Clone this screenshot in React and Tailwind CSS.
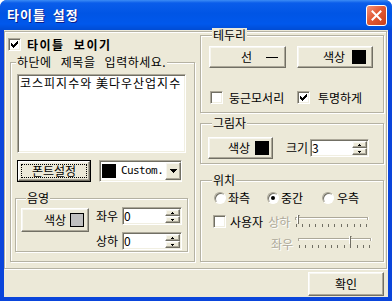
import React from "react";

const sunken =
  "border border-t-[#ACA899] border-l-[#ACA899] border-r-white border-b-white shadow-[inset_1px_1px_0_#716F64,inset_-1px_-1px_0_#F1EFE2]";
const raised =
  "border border-t-white border-l-white border-r-[#716F64] border-b-[#716F64] shadow-[inset_-1px_-1px_0_#ACA899,inset_1px_1px_0_#F7F6F0] bg-[#ECE9D8]";
const etched = "border border-[#B5B2A3] shadow-[inset_1px_1px_0_#fff,1px_1px_0_#fff]";

function Group({ label, labelPos, className, children }) {
  return (
    <div className={`relative ${etched} ${className}`}>
      <span className={`absolute ${labelPos} px-[1px] bg-[#ECE9D8] leading-[14px] whitespace-nowrap`}>
        {label}
      </span>
      {children}
    </div>
  );
}

function Check({ checked }) {
  return (
    <span className={`w-[13px] h-[13px] bg-white ${sunken} flex items-center justify-center shrink-0`}>
      {checked && (
        <svg width="7" height="7" viewBox="0 0 7 7" shapeRendering="crispEdges">
          <path d="M6 0h1v3h-1v1h-1v1h-1v1h-1v1h-1v-1h-1v-1h-1v-3h1v1h1v1h1v-1h1v-1h1z" fill="#000" />
        </svg>
      )}
    </span>
  );
}

function Radio({ checked }) {
  return (
    <span className="w-[12px] h-[12px] rounded-full bg-white border border-t-[#ACA899] border-l-[#ACA899] border-r-white border-b-white shadow-[inset_1px_1px_0_#716F64] flex items-center justify-center shrink-0">
      {checked && <span className="w-[4px] h-[4px] rounded-full bg-black" />}
    </span>
  );
}

function Spin({ value, className }) {
  return (
    <div className={`h-[18px] bg-white ${sunken} flex ${className}`}>
      <span className="flex-1 pl-[1px] leading-[15px] text-[12px]">{value}</span>
      <div className="w-[15px] flex flex-col my-[1px] mr-[1px]">
        <span className={`flex-1 ${raised} flex items-center justify-center`}>
          <svg width="3" height="2" viewBox="0 0 3 2" shapeRendering="crispEdges">
            <path d="M1 0h1v1h1v1h-3v-1h1z" fill="#000" />
          </svg>
        </span>
        <span className={`flex-1 ${raised} flex items-center justify-center`}>
          <svg width="3" height="2" viewBox="0 0 3 2" shapeRendering="crispEdges">
            <path d="M0 0h3v1h-1v1h-1v-1h-1z" fill="#000" />
          </svg>
        </span>
      </div>
    </div>
  );
}

function Slider({ pos }) {
  const ticks = Array.from({ length: 12 }, (_, i) => Math.round(1 + i * 6.4));
  return (
    <svg width="76" height="14" viewBox="0 0 76 14" shapeRendering="crispEdges">
      <rect x="0" y="2" width="73" height="1" fill="#ACA899" />
      <rect x="0" y="2" width="1" height="3" fill="#ACA899" />
      <rect x="1" y="3" width="71" height="1" fill="#fff" />
      <rect x="72" y="2" width="1" height="3" fill="#ACA899" />
      <rect x="73" y="2" width="1" height="3" fill="#fff" />
      <rect x={pos - 1} y="0" width="1" height="8" fill="#fff" />
      <rect x={pos} y="0" width="1" height="9" fill="#716F64" />
      <rect x={pos + 1} y="0" width="1" height="1" fill="#ACA899" />
      {ticks.map((t) => (
        <rect key={t} x={t} y="9" width="1" height="3" fill="#716F64" />
      ))}
    </svg>
  );
}

export default function App() {
  return (
    <div className="w-[392px] h-[301px] flex flex-col bg-[#0A45DB] rounded-t-[7px] overflow-hidden font-['Noto_Sans_CJK_KR',sans-serif] text-[12px] text-black">
      {/* Title bar */}
      <div className="h-[30px] shrink-0 flex items-center pl-[7px] pr-[5px] bg-[linear-gradient(180deg,#3C8CF5_0%,#0A5DEA_10%,#0055E5_45%,#0058EC_80%,#004CD4_100%)]">
        <span className="text-white font-bold text-[13px] tracking-[1px] [word-spacing:3px] leading-[16px] [text-shadow:1px_1px_0_#0A1F8E]">
          타이틀 설정
        </span>
        <div className="ml-auto w-[21px] h-[21px] rounded-[3px] border border-white bg-[linear-gradient(135deg,#F2927A_0%,#E25A35_45%,#C8401C_100%)] flex items-center justify-center">
          <svg width="11" height="11" viewBox="0 0 11 11">
            <path d="M1.5 1.5L9.5 9.5M9.5 1.5L1.5 9.5" stroke="#fff" strokeWidth="2" strokeLinecap="square" />
          </svg>
        </div>
      </div>

      {/* Client */}
      <div className="mx-[4px] mb-[4px] flex-1 bg-[#ECE9D8] flex flex-col">
        <div className={`mt-[1px] w-[383px] h-[238px] ${etched} flex`}>
          {/* Left column */}
          <div className="ml-[3px] w-[187px] flex flex-col">
            <div className="mt-[6px] h-[13px] flex items-center">
              <Check checked />
              <span className="ml-[6px] font-bold leading-[13px] tracking-[1.5px] [word-spacing:5px] whitespace-nowrap">
                타이틀 보이기
              </span>
            </div>
            <Group
              label={<span className="tracking-[0.5px] [word-spacing:6px]">하단에 제목을 입력하세요.</span>}
              labelPos="left-[5px] top-[-8px]"
              className="ml-[2px] mt-[11px] w-[185px] h-[200px] flex flex-col"
            >
              <div className={`ml-[6px] mt-[11px] w-[169px] h-[79px] bg-white ${sunken} pl-[2px] pt-[1px] leading-[14px] tracking-[1px] whitespace-nowrap overflow-hidden`}>
                코스피지수와 美다우산업지수
              </div>
              <div className="ml-[6px] mt-[7px] flex">
                <div className="w-[74px] h-[22px] border border-black flex">
                  <div className={`flex-1 ${raised} p-[2px] flex`}>
                    <div className="flex-1 border border-dotted border-black flex items-center justify-center leading-[14px]">
                      폰트설정
                    </div>
                  </div>
                </div>
                <div className={`ml-[8px] w-[83px] h-[22px] bg-white ${sunken} flex items-center`}>
                  <span className="ml-[2px] w-[14px] h-[14px] bg-black shrink-0" />
                  <span className="ml-[5px] flex-1 font-['DejaVu_Sans_Mono',monospace] text-[11px] tracking-[-0.6px] leading-[14px]">
                    Custom.
                  </span>
                  <div className={`w-[16px] h-[18px] ${raised} flex items-center justify-center`}>
                    <svg width="7" height="4" viewBox="0 0 7 4" shapeRendering="crispEdges">
                      <path d="M0 0h7v1h-1v1h-1v1h-1v1h-1v-1h-1v-1h-1v-1h-1z" fill="#000" />
                    </svg>
                  </div>
                </div>
              </div>
              <Group
                label="음영"
                labelPos="left-[10px] top-[-8px]"
                className="ml-[4px] mt-[16px] w-[173px] h-[54px]"
              >
                <div className="ml-[5px] mt-[8px] flex">
                  <div className={`mt-[1px] w-[68px] h-[24px] ${raised} flex items-center justify-end pr-[4px]`}>
                    <span className="leading-[14px]">색상</span>
                    <span className="ml-[4px] w-[14px] h-[14px] border border-black bg-[#C0C0C0]" />
                  </div>
                  <div className="ml-[7px] flex flex-col">
                    <div className="flex items-center">
                      <span className="w-[22px] leading-[14px] whitespace-nowrap">좌우</span>
                      <Spin value="0" className="ml-[4px] w-[60px]" />
                    </div>
                    <div className="mt-[7px] flex items-center">
                      <span className="w-[22px] leading-[14px] whitespace-nowrap">상하</span>
                      <Spin value="0" className="ml-[4px] w-[60px]" />
                    </div>
                  </div>
                </div>
              </Group>
            </Group>
          </div>

          {/* Right column */}
          <div className="ml-[5px] w-[184px] flex flex-col">
            <Group label="테두리" labelPos="left-[11px] top-[-8px]" className="mt-[3px] h-[78px]">
              <div className="mt-[10px] ml-[8px] flex">
                <div className={`w-[77px] h-[22px] ${raised} flex items-center justify-end pr-[7px]`}>
                  <span className="leading-[14px]">선</span>
                  <span className="ml-[14px] w-[12px] h-[1px] bg-black" />
                </div>
                <div className={`ml-[11px] w-[76px] h-[22px] ${raised} flex items-center justify-end pr-[6px]`}>
                  <span className="leading-[14px]">색상</span>
                  <span className="ml-[7px] w-[14px] h-[14px] bg-black" />
                </div>
              </div>
              <div className="mt-[23px] ml-[9px] h-[13px] flex items-center">
                <div className="w-[87px] flex items-center">
                  <Check />
                  <span className="ml-[6px] leading-[14px] whitespace-nowrap">둥근모서리</span>
                </div>
                <Check checked />
                <span className="ml-[8px] leading-[14px] whitespace-nowrap">투명하게</span>
              </div>
            </Group>

            <Group label="그림자" labelPos="left-[11px] top-[-8px]" className="mt-[10px] h-[41px]">
              <div className="mt-[13px] ml-[7px] flex items-center">
                <div className={`w-[65px] h-[22px] ${raised} flex items-center justify-end pr-[3px]`}>
                  <span className="leading-[14px]">색상</span>
                  <span className="ml-[5px] w-[14px] h-[14px] bg-black" />
                </div>
                <span className="ml-[13px] leading-[14px]">크기</span>
                <Spin value="3" className="ml-[2px] w-[59px]" />
              </div>
            </Group>

            <Group label="위치" labelPos="left-[11px] top-[-8px]" className="mt-[16px] h-[82px]">
              <div className="mt-[10px] ml-[13px] h-[13px] flex items-center">
                <div className="w-[53px] flex items-center">
                  <Radio />
                  <span className="ml-[2px] leading-[14px]">좌측</span>
                </div>
                <div className="w-[55px] flex items-center">
                  <Radio checked />
                  <span className="ml-[2px] leading-[14px]">중간</span>
                </div>
                <div className="flex items-center">
                  <Radio />
                  <span className="ml-[3px] leading-[14px]">우측</span>
                </div>
              </div>
              <div className="mt-[11px] ml-[12px] h-[14px] flex items-start">
                <Check />
                <span className="ml-[4px] leading-[13px] whitespace-nowrap">사용자</span>
                <span className="ml-[5px] leading-[13px] text-[#ACA899] [text-shadow:1px_1px_0_#fff]">상하</span>
                <span className="ml-[5px]">
                  <Slider pos={3} />
                </span>
              </div>
              <div className="mt-[7px] ml-[70px] h-[14px] flex items-start">
                <span className="mt-[1px] leading-[13px] text-[#ACA899] [text-shadow:1px_1px_0_#fff]">좌우</span>
                <span className="ml-[5px]">
                  <Slider pos={52} />
                </span>
              </div>
            </Group>
          </div>
        </div>

        <div className={`self-end mr-[4px] mt-[3px] w-[76px] h-[24px] ${raised} flex items-center justify-center`}>
          <span className="leading-[14px]">확인</span>
        </div>
      </div>
    </div>
  );
}
